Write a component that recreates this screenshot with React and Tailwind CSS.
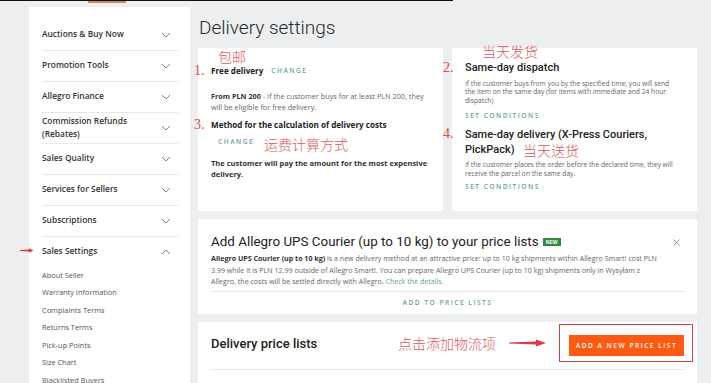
import { X } from "lucide-react";

const menu = [
  { label: "Auctions & Buy Now" },
  { label: "Promotion Tools" },
  { label: "Allegro Finance" },
  { label: ["Commission Refunds", "(Rebates)"] },
  { label: "Sales Quality" },
  { label: "Services for Sellers" },
  { label: "Subscriptions" },
];

const subItems = [
  "About Seller",
  "Warranty Information",
  "Complaints Terms",
  "Returns Terms",
  "Pick-up Points",
  "Size Chart",
  "Blacklisted Buyers",
];

const cn = "font-['Noto_Sans_CJK_SC',sans-serif] text-[#e0575c] font-light";
const num = "font-['Liberation_Serif',serif] text-[#e0474d]";

function Chevron({ up }) {
  return (
    <svg width="10" height="6" viewBox="0 0 10 6" className="mr-[7px] shrink-0">
      <polyline
        points={up ? "1,5 5,1 9,5" : "1,1 5,5 9,1"}
        fill="none"
        stroke="#777"
        strokeWidth="0.9"
      />
    </svg>
  );
}

function Sidebar() {
  return (
    <aside className="w-[161px] ml-[29px] mt-[7px] bg-white pt-[12.5px] pl-[13px] pr-[12px] shrink-0 font-['Open_Sans',sans-serif]">
      {menu.map((m, i) => (
        <div
          key={i}
          className="flex items-center justify-between border-b border-[#e6e8ea] h-[31px]"
        >
          <span className="text-[8.4px] font-semibold text-[#333] leading-[12.5px]">
            {Array.isArray(m.label) ? (
              <>
                {m.label[0]}
                <br />
                {m.label[1]}
              </>
            ) : (
              m.label
            )}
          </span>
          <Chevron />
        </div>
      ))}
      <div className="flex items-center justify-between h-[30px]">
        <span className="text-[8.4px] font-semibold text-[#333]">Sales Settings</span>
        <Chevron up />
      </div>
      {subItems.map((s) => (
        <div key={s} className="h-[17.5px] flex items-center text-[7.4px] text-[#555]">
          {s}
        </div>
      ))}
    </aside>
  );
}

function Teal({ children, className = "" }) {
  return (
    <span
      className={`font-['Open_Sans',sans-serif] text-[6.6px] tracking-[1.5px] text-[#5fa39f] font-semibold ${className}`}
    >
      {children}
    </span>
  );
}

function FreeDeliveryCard() {
  return (
    <div className="relative bg-white pt-[17px] pl-[13px] font-['Open_Sans',sans-serif] text-[#222]">
      <span className={`absolute left-[20px] top-[0px] text-[14px] leading-[16px] ${cn}`}>包邮</span>
      <span className={`absolute left-[-4px] top-[15px] text-[14px] leading-[16px] ${num}`}>1.</span>
      <span className={`absolute left-[-4px] top-[69px] text-[14px] leading-[16px] ${num}`}>3.</span>
      <span className={`absolute left-[66px] top-[87px] text-[14px] leading-[18px] ${cn}`}>
        运费计算方式
      </span>

      <div className="flex items-center h-[12px]">
        <span className="text-[8.1px] font-bold">Free delivery</span>
        <Teal className="ml-[8px]">CHANGE</Teal>
      </div>
      <p className="mt-[13.5px] text-[7.3px] leading-[11px] text-[#666] whitespace-nowrap">
        <b className="text-[#333]">From PLN 200</b> - If the customer buys for at least PLN 200, they
        <br />
        will be eligible for free delivery.
      </p>
      <p className="mt-[6.5px] text-[8.1px] leading-[12px] font-bold whitespace-nowrap">
        Method for the calculation of delivery costs
      </p>
      <div className="mt-[5px] pl-[7px] h-[12px] flex items-center">
        <Teal>CHANGE</Teal>
      </div>
      <p className="mt-[9.5px] text-[7.5px] leading-[11px] font-bold text-[#333] whitespace-nowrap">
        The customer will pay the amount for the most expensive
        <br />
        delivery.
      </p>
    </div>
  );
}

function SameDayCard() {
  return (
    <div className="relative bg-white pt-[13px] pl-[13px] text-[#222]">
      <span className={`absolute left-[30px] top-[-6px] text-[14px] leading-[18px] ${cn}`}>当天发货</span>
      <span className={`absolute left-[-9px] top-[12px] text-[14px] leading-[16px] ${num}`}>2.</span>
      <span className={`absolute left-[-9px] top-[78px] text-[14px] leading-[16px] ${num}`}>4.</span>
      <span className={`absolute left-[71px] top-[93px] text-[14px] leading-[18px] ${cn}`}>当天送货</span>

      <h3 className="font-['Roboto',sans-serif] font-medium text-[11px] leading-[14px]">
        Same-day dispatch
      </h3>
      <p className="mt-[4.75px] font-['Open_Sans',sans-serif] text-[6.7px] leading-[8.5px] text-[#666] whitespace-nowrap">
        If the customer buys from you by the specified time, you will send
        <br />
        the item on the same day (for items with immediate and 24 hour
        <br />
        dispatch)
      </p>
      <div className="mt-[5.75px] h-[10px] flex items-center">
        <Teal>SET CONDITIONS</Teal>
      </div>
      <h3 className="mt-[5.5px] font-['Roboto',sans-serif] font-medium text-[11px] leading-[15px] whitespace-nowrap">
        Same-day delivery (X-Press Couriers,
        <br />
        PickPack)
      </h3>
      <p className="mt-[3px] font-['Open_Sans',sans-serif] text-[6.7px] leading-[9px] text-[#666] whitespace-nowrap">
        If the customer places the order before the declared time, they will
        <br />
        receive the parcel on the same day.
      </p>
      <div className="mt-[4.5px] h-[10px] flex items-center">
        <Teal>SET CONDITIONS</Teal>
      </div>
    </div>
  );
}

function UpsCard() {
  return (
    <div className="relative bg-white px-[13px] pt-[15px] pb-[6px]">
      <div className="flex items-center h-[16px]">
        <h2 className="font-['Roboto',sans-serif] text-[13.4px] text-[#222] whitespace-nowrap">
          Add Allegro UPS Courier (up to 10 kg) to your price lists
        </h2>
        <span className="ml-[4px] bg-[#2f8a3c] text-white text-[5px] font-bold font-['Liberation_Sans',sans-serif] px-[2px] h-[8px] leading-[8px] w-[18px] text-center">
          NEW
        </span>
        <X size={11} strokeWidth={1.4} className="ml-auto mr-[2px] text-[#666]" />
      </div>
      <p className="mt-[3.25px] font-['Open_Sans',sans-serif] text-[7.1px] leading-[11.5px] text-[#666] whitespace-nowrap">
        <b className="text-[#333]">Allegro UPS Courier (up to 10 kg)</b> is a new delivery method at an attractive price: up to 10 kg shipments within Allegro Smart! cost PLN
        <br />
        3.99 while it is PLN 12.99 outside of Allegro Smart!. You can prepare Allegro UPS Courier (up to 10 kg) shipments only in Wysyłam z
        <br />
        Allegro, the costs will be settled directly with Allegro.{" "}
        <span className="text-[#5fa39f]">Check the details.</span>
      </p>
      <div className="mt-[3.5px] border-t border-[#e6e8ea]" />
      <div className="mt-[6px] h-[10px] flex items-center justify-center">
        <Teal>ADD TO PRICE LISTS</Teal>
      </div>
    </div>
  );
}

function PriceListsCard() {
  return (
    <div className="relative bg-white px-[13px] pt-[13px] h-[80px]">
      <span className={`absolute left-[200px] top-[11px] text-[14px] leading-[20px] ${cn}`}>
        点击添加物流项
      </span>
      <svg width="38" height="8" viewBox="0 0 38 8" className="absolute left-[311px] top-[17px]">
        <polygon points="0,3.6 27,2.6 27,0.4 37,4 27,7.6 27,5.4 0,4.4" fill="#e0383e" />
      </svg>
      <div className="absolute left-[361px] top-[2px] w-[134px] h-[38px] border-[1.5px] border-[#d2434b]" />

      <div className="flex items-start justify-between">
        <h2 className="font-['Roboto',sans-serif] font-medium text-[13px] leading-[18px] text-[#222]">
          Delivery price lists
        </h2>
        <button className="w-[115px] h-[21px] bg-[#ff5a10] text-white font-['Open_Sans',sans-serif] font-semibold text-[6.6px] tracking-[1.5px]">
          ADD A NEW PRICE LIST
        </button>
      </div>
      <div className="mt-[13px] border-t border-[#e6e8ea]" />
    </div>
  );
}

export default function App() {
  return (
    <div className="relative w-[711px] h-[383px] overflow-hidden bg-[#eceef0]">
      <div className="absolute left-0 top-0 w-[453px] h-[1px] bg-[#111]" />
      <div className="absolute left-[88px] top-[1px] w-[38px] h-[2px] bg-[#c98a6a]" />
      <svg width="14" height="5" viewBox="0 0 14 5" className="absolute left-[20px] top-[247.5px]">
        <polygon points="0,2.1 9,1.6 9,0.2 13.5,2.5 9,4.8 9,3.4 0,2.9" fill="#e0383e" />
      </svg>

      <div className="flex">
        <Sidebar />
        <main className="w-[499px] ml-[8px] pt-[16px]">
          <h1 className="font-['Roboto',sans-serif] font-light text-[19px] leading-[24px] text-[#2a2a2a] pl-[1px]">
            Delivery settings
          </h1>
          <div className="mt-[8px] grid grid-cols-[245px_245px] gap-[9px] h-[163px]">
            <FreeDeliveryCard />
            <SameDayCard />
          </div>
          <div className="mt-[8px]">
            <UpsCard />
          </div>
          <div className="mt-[8px]">
            <PriceListsCard />
          </div>
        </main>
      </div>
    </div>
  );
}
